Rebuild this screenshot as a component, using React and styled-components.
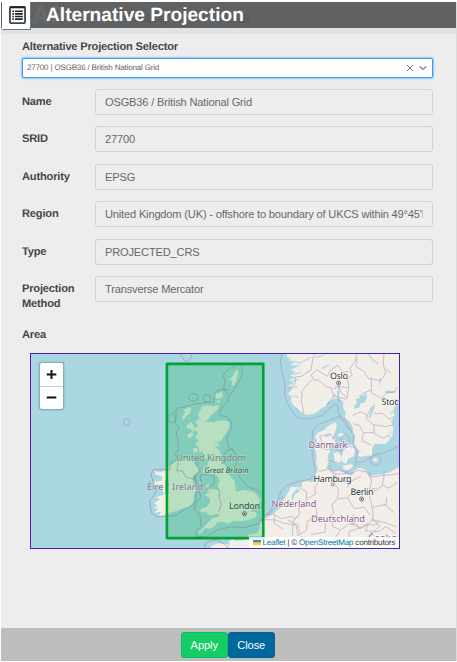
import React from "react";
import styled, { createGlobalStyle } from "styled-components";

const GlobalStyle = createGlobalStyle`
  * { box-sizing: border-box; }
  body { margin: 0; background: #fdfdfd; text-rendering: geometricPrecision; }
`;

const Dialog = styled.main`
  width: 455.5px;
  height: 659px;
  margin: 2px 0 0 1px;
  display: flex;
  flex-direction: column;
  background: #ededed;
  border-right: 1px solid #dcdcdc;
  font-family: "Liberation Sans", Arial, sans-serif;
  font-size: 11.1px;
  letter-spacing: -0.18px;
  color: #454545;
`;

const Header = styled.header`
  position: relative;
  flex: none;
  display: flex;
  height: 32px;
  background: linear-gradient(#606163 26px, #e2e3e4 26px);
`;

const Ghost = styled.span`
  position: absolute;
  left: ${(p) => p.$x}px;
  top: ${(p) => p.$y}px;
  font: ${(p) => p.$weight || 400} ${(p) => p.$size}px "Noto Sans", sans-serif;
  line-height: 1;
  color: ${(p) => p.$color || "#68696b"};
`;

const MenuButton = styled.button`
  position: relative;
  width: 29px;
  height: 28px;
  margin-left: 1px;
  padding: 0 0 2px 2px;
  display: flex;
  align-items: center;
  justify-content: center;
  background: #fff;
  border: 0;
  border-right: 1px solid #77787a;
  border-bottom: 1px solid #77787a;
`;

const Title = styled.h1`
  position: relative;
  margin: 0 0 0 15px;
  font: 700 19.15px/28px "Liberation Sans", Arial, sans-serif;
  letter-spacing: 0;
  color: #fff;
  white-space: nowrap;
`;

const Body = styled.section`
  flex: 1;
  padding: 5.5px 22.3px 0 21px;
`;

const SelectorLabel = styled.label`
  display: block;
  height: 16px;
  line-height: 14px;
  font-weight: 700;
`;

const Select = styled.div`
  height: 20.5px;
  margin-top: 2px;
  padding: 0 5px 0 4px;
  display: flex;
  align-items: center;
  gap: 5px;
  background: #fff;
  border: 1px solid #3b99f0;
  border-radius: 2px;
  box-shadow: 0 0 1.5px 1px #8fcaf8;
  font-size: 8px;
  letter-spacing: -0.17px;
  color: #606266;
`;

const SelectValue = styled.span`
  flex: 1;
`;

const Fields = styled.div`
  margin-top: 11px;
  display: grid;
  grid-auto-rows: 26px;
  row-gap: 11.4px;
`;

const Field = styled.div`
  display: grid;
  grid-template-columns: 73px 1fr;
`;

const Label = styled.label`
  line-height: 15px;
  padding-top: 6px;
  font-weight: 700;
`;

const Input = styled.input`
  width: 100%;
  height: 26px;
  padding: 0 9px;
  background: #ededed;
  border: 1px solid #d2d2d2;
  border-radius: 3px;
  font: inherit;
  letter-spacing: inherit;
  color: #686868;
  outline: 0;
`;

const AreaLabel = styled.div`
  margin-top: 25px;
  height: 26px;
  line-height: 16px;
  font-weight: 700;
`;

const MapFrame = styled.div`
  position: relative;
  width: 370px;
  height: 196px;
  margin-left: 8px;
  border: 1px solid #4b1fae;
  overflow: hidden;
`;

const MapCanvas = styled.svg`
  display: block;
  width: 368px;
  height: 194px;
  letter-spacing: 0;
`;

const ZoomControl = styled.div`
  position: absolute;
  left: 9px;
  top: 9px;
  width: 23px;
  border-radius: 2px;
  background: #fff;
  box-shadow: 0 0 0 1px #88afb9, 0 0 2px 1px #7aa3ae;
`;

const ZoomButton = styled.button`
  display: flex;
  align-items: center;
  justify-content: center;
  width: 23px;
  height: 23px;
  padding: 0;
  border: 0;
  background: none;
  color: #111;

  & + & { border-top: 1px solid #ccc; }
`;

const Attribution = styled.div`
  position: absolute;
  right: 0;
  bottom: 0;
  height: 11px;
  padding: 0 4px;
  display: flex;
  align-items: center;
  background: rgba(255, 255, 255, 0.85);
  font-size: 8.1px;
  letter-spacing: -0.22px;
  line-height: 11px;
  white-space: pre;
  color: #333;
`;

const Flag = styled.svg`
  width: 8px;
  height: 5px;
  margin-right: 2px;
`;

const MapLink = styled.a`
  color: #0078a8;
`;

const Footer = styled.footer`
  flex: none;
  height: 33px;
  display: flex;
  justify-content: center;
  align-items: center;
  background: #bdbdbd;
`;

const Button = styled.button`
  width: 47px;
  height: 26px;
  padding: 0 1px 0 0;
  background: ${(p) => (p.$primary ? "#13ce66" : "#00689d")};
  border: 1px solid ${(p) => (p.$primary ? "#0ebd5c" : "#006194")};
  border-radius: 3px;
  font: inherit;
  letter-spacing: -0.1px;
  color: #fff;
`;

const fields = [
  ["Name", "OSGB36 / British National Grid"],
  ["SRID", "27700"],
  ["Authority", "EPSG"],
  ["Region", "United Kingdom (UK) - offshore to boundary of UKCS within 49°45'N to 61°N and 9°W to 2°E"],
  ["Type", "PROJECTED_CRS"],
  ["Projection Method", "Transverse Mercator"],
];

const places = [
  { text: "United Kingdom", x: 176, y: 460.5, w: 70, size: 9.3, color: "#6f8381", halo: "#b4dccb" },
  { text: "Great Britain", x: 204.5, y: 472.6, w: 44, size: 7.8, color: "#2b5847", italic: true, halo: "#bfe1c8" },
  { text: "Éire / Ireland", x: 147, y: 490, w: 56, size: 9, color: "#797e91", halo: "#cfdfdf" },
  { text: "London", x: 229, y: 509, w: 31, size: 9, color: "#28473a", halo: "#c9e6cb" },
  { text: "Oslo", x: 330, y: 379, w: 18, size: 9, color: "#333", halo: "#fff" },
  { text: "Stoc", x: 381.5, y: 405, w: 17, size: 9, color: "#333", halo: "#fff" },
  { text: "Danmark", x: 308.5, y: 447.5, w: 39, size: 9.2, color: "#8b5b88", halo: "#fff" },
  { text: "Hamburg", x: 313.5, y: 481.5, w: 38, size: 9, color: "#333", halo: "#fff" },
  { text: "Berlin", x: 350.5, y: 495, w: 23, size: 9, color: "#333", halo: "#fff" },
  { text: "Nederland", x: 271.5, y: 506.5, w: 45, size: 9.2, color: "#8b5b88", halo: "#fff" },
  { text: "Deutschland", x: 311, y: 521.5, w: 54, size: 9.2, color: "#8b5b88", halo: "#fff" },
  { text: "Česko", x: 368, y: 540.5, w: 29, size: 9.2, color: "#8b5b88", halo: "#fff" },
];

function ListIcon() {
  return (
    <svg width="17" height="18" viewBox="0 0 18 19">
      <rect x="1" y="1" width="16" height="17" rx="1" fill="#fff" stroke="#34435c" strokeWidth="1.9" />
      <path d="M1 1.4H17" stroke="#222" strokeWidth="2" />
      <path d="M3.5 5.5H5.2M3.5 8.3H5.2M3.5 11.1H5.2M3.5 13.9H5.2" stroke="#222" strokeWidth="1.7" />
      <path d="M6.4 5.5H14.6M6.4 8.3H14.6M6.4 11.1H14.6M6.4 13.9H14.6" stroke="#222" strokeWidth="1.7" />
    </svg>
  );
}

function AreaMap() {
  return (
    <MapCanvas viewBox="31 354 368 194">
      <rect x="31" y="354" width="368" height="194" fill="#aad7e2" />

      {/* Great Britain, Ireland and the Channel coast */}
      <g transform="translate(140 345) scale(.3333)" strokeLinejoin="round">
        <g fill="#f2efe9">
          <path d="M185 184L203 181 218 184 237 180 233 193 219 206 205 222 195 233 211 229 219 234 229 227 252 226 268 230 269 242 260 261 250 276 244 287 231 293 220 291 236 297 240 304 223 304 234 313 241 321 247 337 250 355 260 369 265 388 277 400 286 410 283 418 289 428 284 435 294 440 310 435 328 437 344 443 356 456 360 470 352 482 338 490 331 500 347 501 352 508 345 518 325 525 309 529 282 528 264 536 249 531 232 532 224 543 211 551 196 549 186 561 174 568 179 558 193 545 205 532 217 519 236 516 240 508 226 507 211 512 199 502 182 501 181 492 200 486 209 475 210 459 194 450 205 443 207 433 225 433 237 437 233 420 240 406 230 391 220 385 204 391 188 382 190 371 203 360 204 345 191 337 183 345 190 318 178 323 176 307 166 296 177 287 165 278 174 264 163 252 174 243 166 230 178 220 173 208 181 196Z" />
          <path d="M130 194L145 187 155 189 149 205 136 216 131 227 126 217 136 203ZM141 239l13-8 7 12 8 8-8 11-9-9-12-3ZM142 269l14-8 5 10-15 10ZM158 311l13-4 3 12-12 7ZM228 146l19-6 2 13-12 9-11-4ZM224 168l18-2-3 9ZM276 97l9-16 7-9 3 12-6 21-7 18-7-2 3-14-12-3ZM191 423l16-4 1 10-16 2Z" />
          <path d="M75 378L58 382 42 377 48 389 68 394 65 407 44 410 43 419 58 425 68 435 72 449 47 457 60 462 40 477 53 480 40 491 54 490 45 503 64 500 55 513 76 510 92 503 111 497 129 490 149 485 160 470 163 449 169 432 160 417 157 398 174 385 177 370 166 360 158 345 139 339 119 342 103 354 89 360Z" />
          <path d="M268 588L276 582 291 588 313 585 326 570 352 564 359 547 360 526 384 516 408 509 430 485 450 480 450 620 270 620ZM214 603l20-8 29 3 10 12h-58Z" />
        </g>
        <g fill="none" stroke="#a486b1" strokeWidth="2.5" opacity=".75">
          <path d="M119 22L133 47Q144 54 151 43L158 23M296 58Q309 63 307 80L304 99 291 119 275 145Q262 153 265 168L245 188 237 210 260 216Q278 229 275 247L260 282 266 305 286 326 292 348 285 370 300 399 323 425 351 435 369 452 365 489 372 513 360 535 315 548 279 545 252 550 224 559 199 577 173 574 165 561 183 544 180 511 163 493 168 474 182 457 178 440 170 414 164 392" />
          <path d="M265 145L252 136Q250 123 256 106L250 96Q252 75 280 66L296 58M221 150q10-19 30-17l15 2M223 154l-3 20q-15-5-25-1l-36 5-26 9q-33-3-24 24l-4 23 12 15-8 15 4 20 2 31-11 12 13 17" />
          <ellipse cx="160" cy="157" rx="15" ry="11" /><circle cx="201" cy="160" r="12" /><ellipse cx="95" cy="220" rx="11" ry="13" />
          <path d="M104 346L93 354 89 374 60 373 40 374 33 389 39 408 38 421 50 433 44 449 29 468 34 503 50 515 74 514 105 512 145 487 165 475 168 447 172 425 161 393 181 378 168 357 184 341M115 353l-5 24 18 1 10 18 23 7 12-18M232 430l7 8-2 23 7 12-4 18-6 11M248 333l10-14 18-9 8 14M180 392q16-9 30-1l13 2-1 24-23 14-15-20ZM192 609l7-17 30-7 25 12 14 17M360 530l8-14 19-14 17-25 26-25" />
        </g>
      </g>

      {/* Scandinavia and continental Europe */}
      <g transform="translate(265 345) scale(.3333)" strokeLinejoin="round">
        <g fill="#f2efe9">
          <path d="M64 20L66 37 78 41 69 49 88 52 74 61 96 65 77 75 91 82 75 93 94 97 72 105 88 114 70 122 83 132 69 146 80 157 78 172 88 184 98 190 108 202 125 210 144 207 158 200 168 191 181 184 190 171 204 162 218 158 216 137 224 139 222 160 235 171 234 188 242 203 240 219 253 229 264 249 263 263 271 272 268 295 280 317 278 334 294 335 309 331 320 333 322 309 330 296 359 298 371 287 375 263 384 246 378 227 390 213 385 197 393 174 388 163 405 164V20Z" />
          <path d="M0 520L25 507 44 490 57 464 70 440 78 426 111 425 110 412 126 408 139 411 158 406 151 391 159 373 153 352 155 333 149 309 156 288 150 276 158 263 178 255 189 243 211 232 216 244 210 262 201 280 214 282 210 293 194 300 195 319 188 333 191 351 184 369 201 379 222 375 243 386 261 392 266 379 282 368 295 371 306 382 313 394 336 389 370 383 406 365V610H0Z" />
          <path d="M206 324L221 321 231 337 224 353 209 348ZM235 313l12-13 16 0 8 14-5 20-17 8-6 15-14-9ZM232 363l25-7 12 9-15 11-18-3ZM218 269l13-6 8 7-13 8ZM323 343l9-5 7 7-8 6ZM372 289l6-30 8-17-4 29Z" />
        </g>
        <g fill="#aad7e2">
          <path d="M267 184L276 175 272 163 284 159 283 149 295 150 303 143 306 158 299 173 288 174 281 188 268 192ZM311 220l8-29 10-17 0 14-12 29ZM80 450l17-20 8 8-14 9-9 21ZM191 362h15l-7 7ZM361 137l30 1-5 5-24 2ZM181 271l18-3-18 10Z" />
        </g>
        <path d="M69 46l37 8 30-16M75 61l28 2M75 90l32-7M77 109l25-6M76 129l22-5M78 151l22 5M218 151l4-27M205 166l5-20M310 26l13 19 18 12M341 121l7-22M375 180l26-5M375 206l15-9M363 72l15 13M150 38l29-9M171 71l20-12" stroke="#b7dce3" fill="none" strokeWidth="4" />
        <g stroke="#af83b1" strokeWidth="2.5" fill="none" opacity=".6">
          <path d="M51 22Q42 48 50 75L60 122 59 151Q65 176 79 195L91 213Q111 226 141 220L173 211 190 193 213 176 218 182 220 202 234 229 251 246 266 271 264 298 278 328M223 174l-3-16M278 20l-8 28-15 23 6 18-13 13 3 19-4 38-19-17-9-22M150 20l-7 24-5 31-29 19-17 2-3 23-20 12M139 90l7 15 15 1 24 20 14 3 6 24-20 28M139 105l-27 31-3 31 8 40M139 90L154 74 187 94 197 75 218 61 235 82 250 80M205 132l15-8 25 4M204 151l40 12M277 39l-5 24 24 16 16 24 7-5 0 45 31 18 16-19 22 0 7-15M316 102l32 5 14-23-7-25 2-34M320 134l-31 13M320 185l-17 35 23 19 2 24-33 0-4 24 27 13M329 206l23-1 20 18 19-11M327 239l37 6 20-6M294 262l-10-20-19-6M326 265l28 15 20-10M263 211l25-11 22 14" />
          <path d="M1 520L30 486 48 441 61 423 93 411 137 402 151 383 145 345 140 308 143 258 160 238 190 227 224 214 241 226 247 248 265 262M160 306l27 8 24-5 19 11 17-15 17 0 18 14-10 23-1 19-25 21-26-7-18 4-11-19M172 295l-8-22 31-6 19 23M208 352l-22-7M234 303l-8-26 18-11 10 17-8 16M275 352l17 0 42-25 26-4 44-22M406 386l-57 6-33 5-13-17-23-4-20 9-51 2-20-15-27 8M315 346q3-17 20-17 16 6 12 21-14 18-27 7Z" />
          <path d="M101 427l24 14-1 25-23 21 3 23-16 11-7-7-31 7-25-14-18 2M128 460l23-12-2-23 14-16M102 488l35-8 18 10 0 24 26 13 25-23-5-24 16-18 31-4 19-24 30 5 33-9M201 406l20 28-4 26M205 380l17 29 38-1 28-15M245 428l18-23M248 460l20 31 30-4 16 22M155 514l-28 15-3 26-24 17M202 512l0 32 25 11 24-17 22-2 12 15 26-12 18 2 13-13M313 380l7 28-9 34 10 42 4 37-12 13M325 440l30-19 17 9 25-18M324 487l36-8 27 24M351 421l8-33M363 482l2-25M102 510l-17 19-3 42M0 524l32 1 24 10 37 5 6 33M30 510l-3 24 27 19M225 558l-16 22M286 548l-34 12 0 19M310 537l-8 21 38 2 23-15 29 20M325 525l40 9 27 11M181 529l0 32-43 8M265 538l0-30M350 393l12-15" />
        </g>
        <path d="M256 536l28 12 27-13M317 519l28 25-40 34M70 526l30 14 4 27" stroke="#a77bae" strokeWidth="4" fill="none" opacity=".3" />
      </g>
      <circle cx="126.5" cy="422.2" r="3.2" fill="none" stroke="#a69abd" strokeWidth=".8" />

      <rect x="166.9" y="363.9" width="96.4" height="174.2" fill="#00ac3c" fillOpacity=".24" stroke="#00a230" strokeWidth="2.6" strokeLinejoin="round" />

      {places.map((p) => (
        <text key={p.text} x={p.x} y={p.y} textLength={p.w} fontSize={p.size}
          fontFamily="Noto Sans, sans-serif" fontStyle={p.italic ? "italic" : "normal"}
          fill={p.color} stroke={p.halo} strokeWidth="1.6" strokeOpacity=".65" paintOrder="stroke">
          {p.text}
        </text>
      ))}
      {[[244.5, 513.7], [338.6, 383], [361.6, 499]].map(([x, y]) => (
        <g key={x}>
          <circle cx={x} cy={y} r="2" fill="none" stroke="#444" strokeWidth=".7" />
          <circle cx={x} cy={y} r=".8" fill="#333" />
        </g>
      ))}
      <rect x="331.2" y="483.2" width="2.6" height="2.6" fill="#fff" stroke="#777" strokeWidth=".6" />
      <path d="M166.9 480V494" stroke="#00a230" strokeWidth="2.6" />
    </MapCanvas>
  );
}

export default function App() {
  return (
    <>
      <GlobalStyle />
      <Dialog>
        <Header>
          <Ghost $x={31} $y={1} $size={25} $weight={700}>AP</Ghost>
          <Ghost $x={79} $y={4} $size={19} $color="#666769">GIS</Ghost>
          <Ghost $x={127} $y={10} $size={12} $color="#58595b">Testing</Ghost>
          <Ghost $x={218} $y={12} $size={10} $color="#555a5d">Project</Ghost>
          <Ghost $x={257} $y={14} $size={5} $color="#506371">▼</Ghost>
          <MenuButton aria-label="Menu"><ListIcon /></MenuButton>
          <Title>Alternative Projection</Title>
        </Header>
        <Body>
          <SelectorLabel>Alternative Projection Selector</SelectorLabel>
          <Select>
            <SelectValue>27700 | OSGB36 / British National Grid</SelectValue>
            <svg width="8" height="8" viewBox="0 0 8 8" fill="none" stroke="#777d85" strokeWidth="1"><path d="M1 1l6 6M7 1L1 7" /></svg>
            <svg width="8" height="8" viewBox="0 0 8 8" fill="none" stroke="#777d85" strokeWidth="1.2"><path d="M.8 2.5L4 5.5 7.2 2.5" /></svg>
          </Select>
          <Fields>
            {fields.map(([label, value]) => (
              <Field key={label}>
                <Label>{label}</Label>
                <Input value={value} readOnly />
              </Field>
            ))}
          </Fields>
          <AreaLabel>Area</AreaLabel>
          <MapFrame>
            <AreaMap />
            <ZoomControl>
              <ZoomButton aria-label="Zoom in">
                <svg width="11" height="11" viewBox="0 0 11 11" stroke="currentColor" strokeWidth="2"><path d="M.7 5.5H10.3M5.5 1V10" /></svg>
              </ZoomButton>
              <ZoomButton aria-label="Zoom out">
                <svg width="11" height="11" viewBox="0 0 11 11" stroke="currentColor" strokeWidth="2"><path d="M.7 5.5H10.3" /></svg>
              </ZoomButton>
            </ZoomControl>
            <Attribution>
              <Flag viewBox="0 0 8 5"><path fill="#4c7be1" d="M0 0h8v2.5H0z" /><path fill="#ffd500" d="M0 2.5h8V5H0z" /></Flag>
              <MapLink>Leaflet</MapLink>{" | © "}<MapLink>OpenStreetMap</MapLink>{" contributors"}
            </Attribution>
          </MapFrame>
        </Body>
        <Footer>
          <Button $primary>Apply</Button>
          <Button>Close</Button>
        </Footer>
      </Dialog>
    </>
  );
}
